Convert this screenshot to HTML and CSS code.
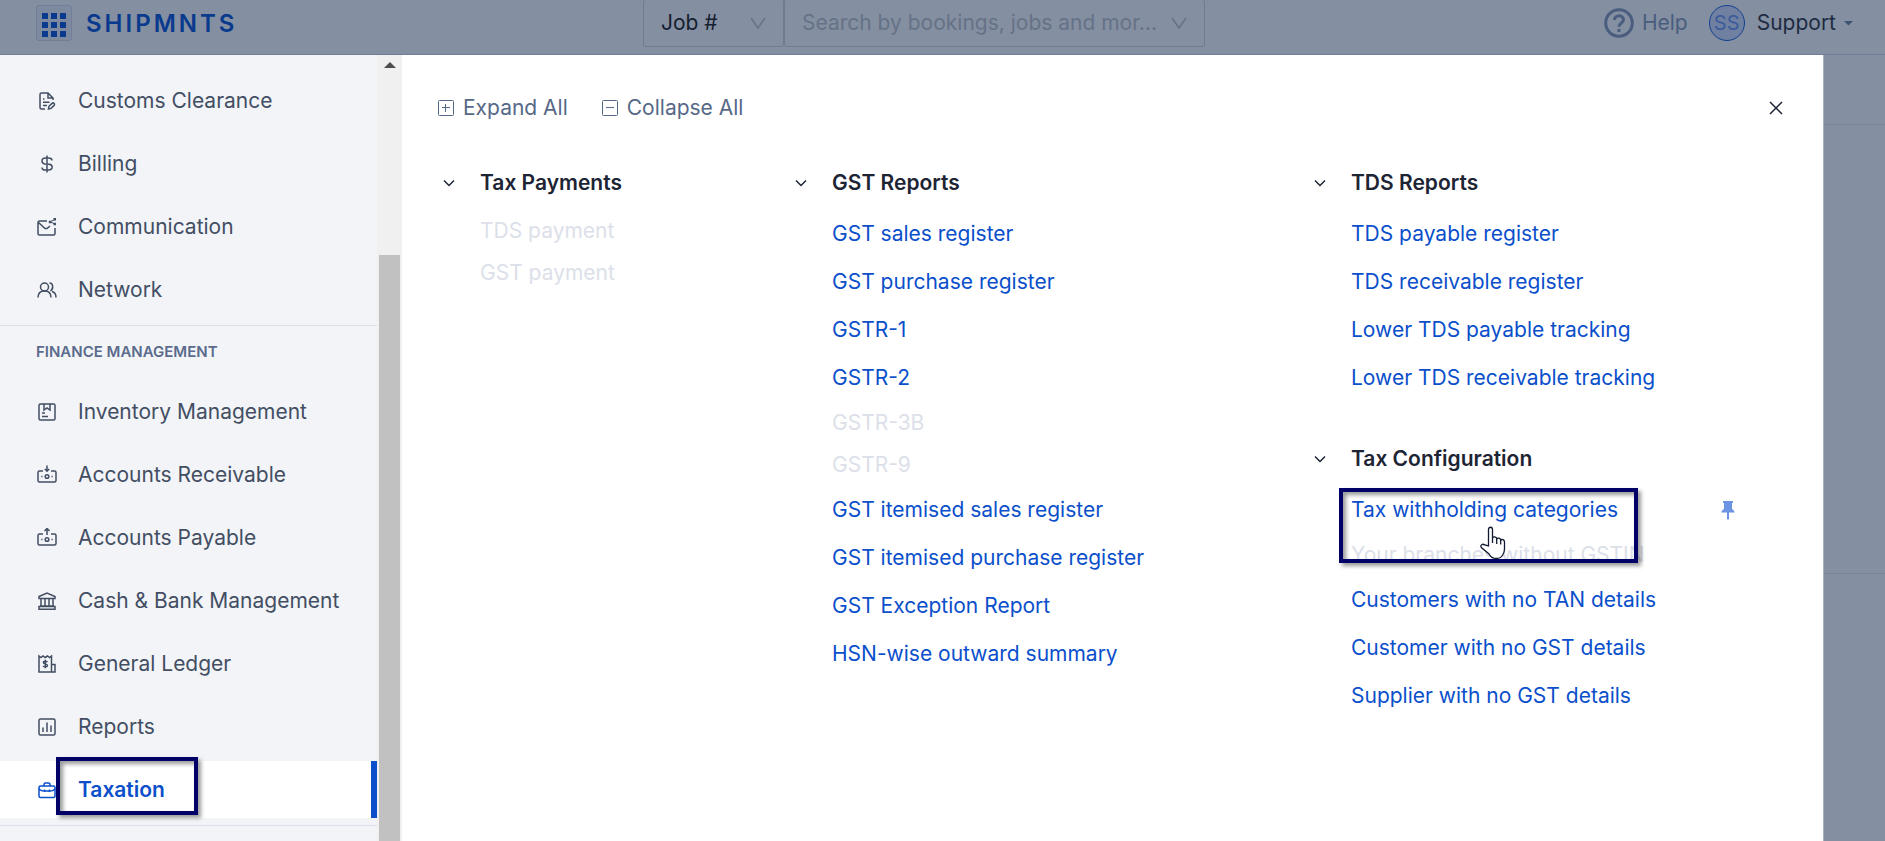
FILE: index.html
```
<!DOCTYPE html>
<html lang="en">
<head>
  <meta charset="UTF-8" />
  <meta name="viewport" content="width=device-width, initial-scale=1.0"/>
  <title>Shipmnts - Taxation</title>
  <link rel="stylesheet" href="styles.css">
</head>
<body>

  <!-- TOP BAR -->
  <header class="topbar">
    <div class="brand">
      <button type="button" class="apps-btn" aria-label="Menu">
        <svg width="24" height="24" viewBox="0 0 24 24"><path d="M0 0h6v6H0zM9 0h6v6H9zM18 0h6v6h-6zM0 9h6v6H0zM9 9h6v6H9zM18 9h6v6h-6zM0 18h6v6H0zM9 18h6v6H9zM18 18h6v6h-6z" fill="currentColor"/></svg>
      </button>
      <a href="#" class="brand-name">SHIPMNTS</a>
    </div>

    <form class="search">
      <div class="search-type">
        <select aria-label="Search type">
          <option>Job #</option>
        </select>
        <svg class="arrow" width="16" height="12" viewBox="0 0 16 12"><path d="M1 1l7 10 7-10"/></svg>
      </div>
      <div class="search-box">
        <input type="text" aria-label="Search" placeholder="Search by bookings, jobs and mor...">
        <svg class="arrow" width="16" height="12" viewBox="0 0 16 12"><path d="M1 1l7 10 7-10"/></svg>
      </div>
    </form>

    <div class="topbar-right">
      <a href="#" class="help">
        <svg width="30" height="30" viewBox="0 0 30 30" fill="none" stroke="currentColor" stroke-width="3"><circle cx="15" cy="15" r="13.3"/><path d="M10.500 12c0-2.600 2-4.200 4.500-4.200s4.500 1.600 4.500 4c0 3-4.500 3.400-4.500 7"/><path d="M15 21v3"/></svg>
        Help
      </a>
      <button type="button" class="user">
        <span class="avatar">SS</span>
        <span>Support</span>
        <svg width="9" height="5" viewBox="0 0 9 5"><path d="M0 0h9L4.500 4.500z" fill="#3f5272"/></svg>
      </button>
    </div>
  </header>

  <div class="layout">

    <!-- SIDEBAR -->
    <aside class="sidebar">
      <nav class="side-nav">
        <ul class="side-group">
          <li><a href="#">
            <svg viewBox="0 0 20 20"><path d="M8 18H4.500A1.500 1.500 0 0 1 3 16.500v-13A1.500 1.500 0 0 1 4.500 2H11l5 5v2M11 2v5h5M6 8h1.500M6 11.200h6.500M6 14.400h4"/><path d="M11.500 18l.5-2.700 3-2.900a1.300 1.300 0 0 1 2.100 2l-3 3z"/></svg>
            Customs Clearance</a></li>
          <li><a href="#">
            <svg viewBox="0 0 20 20"><path d="M10 1.500v17M15 6.500C15 4.700 13.500 4 11.500 4h-3C6.500 4 5 5.200 5 7s1.300 2.700 3 3l4 .3c2 .2 3.200 1 3.200 2.800S13.500 16 11.500 16h-3C6.500 16 5 15.200 5 13.400" /></svg>
            Billing</a></li>
          <li><a href="#">
            <svg viewBox="0 0 20 20"><path d="M10 4H2.500A1.500 1.500 0 0 0 1 5.500v11A1.500 1.500 0 0 0 2.500 18h14a1.500 1.500 0 0 0 1.500-1.500V11M1.500 5.500l6.500 6h2l3-2.500"/><path d="M18 2.500L13 4.800l5 2.200" stroke-width="1"/><path d="M11.800 3.800h2.400v2.400h-2.400zM16.500 1h2.500v2.500h-2.500zM16.500 5.800h2.500v2.500h-2.500z" fill="currentColor" stroke="none"/></svg>
            Communication</a></li>
          <li><a href="#">
            <svg viewBox="0 0 20 20"><circle cx="7.500" cy="7" r="4"/><path d="M1 17.500c0-4 2.500-6.500 6.500-6.500s6.500 2.500 6.500 6.500M12.500 3c3.500-.2 4.500 5.500 1 8M15 11.500c2.800.7 4 3 4 6"/></svg>
            Network</a></li>
        </ul>

        <h2 class="side-title">FINANCE MANAGEMENT</h2>
        <ul class="side-group">
          <li><a href="#">
            <svg viewBox="0 0 20 20"><rect x="2" y="2" width="16" height="16" rx="1.500"/><path d="M7 2v6l3-2 3 2V2M5 11h3M5 14.500h6"/></svg>
            Inventory Management</a></li>
          <li><a href="#">
            <svg viewBox="0 0 20 20"><path d="M6 6H2.500A1.500 1.500 0 0 0 1 7.500v8A1.500 1.500 0 0 0 2.500 17h15a1.500 1.500 0 0 0 1.500-1.500v-8A1.500 1.500 0 0 0 17.500 6H14M10 .5V6M7.800 4L10 6.200 12.200 4M4.300 11.500h1.200M14.500 11.500h1.200"/><circle cx="10" cy="11.500" r="1.800"/></svg>
            Accounts Receivable</a></li>
          <li><a href="#">
            <svg viewBox="0 0 20 20"><path d="M6 6H2.500A1.500 1.500 0 0 0 1 7.500v8A1.500 1.500 0 0 0 2.500 17h15a1.500 1.500 0 0 0 1.500-1.500v-8A1.500 1.500 0 0 0 17.500 6H14M10 .8V7M7.500 3L10 .5 12.500 3M4.300 11.500h1.200M14.500 11.500h1.200"/><circle cx="10" cy="11.500" r="1.800"/></svg>
            Accounts Payable</a></li>
          <li><a href="#">
            <svg viewBox="0 0 20 20"><path d="M2 5.500L10 2l8 3.500v2H2zM4 7.500V15M8 7.500V15M12 7.500V15M16 7.500V15M3 15h14M2 18.200h16V15.500H2z"/></svg>
            Cash &amp; Bank Management</a></li>
          <li><a href="#">
            <svg viewBox="0 0 20 20"><path d="M14.500 18H2V2l2 1.500L6 2l2.200 1.500L10.500 2l2 1.500 2-1.500zM14.500 10.500H18V18h-3.500"/><path d="M8.300 5.800v8.400M10.500 8c-.8-1-4.200-1.200-4.200.5s4.200 1 4.200 2.900-3.500 1.700-4.400.6"/></svg>
            General Ledger</a></li>
          <li><a href="#">
            <svg viewBox="0 0 20 20"><rect x="2" y="2" width="16" height="16" rx="1.500"/><path d="M6 10.500V15M10 5.500V15M14 8.500V15"/></svg>
            Reports</a></li>
          <li class="active"><a href="#">
            <svg viewBox="0 0 20 20"><rect x="2" y="6" width="16" height="11.500" rx="1.500"/><path d="M7 6V4.500A1.500 1.500 0 0 1 8.500 3h3A1.500 1.500 0 0 1 13 4.500V6M2 8.500c1 2.500 3 2.500 5.500 2.500h5c2.500 0 4.500 0 5.500-2.500M7.500 9.500V12M12.500 9.500V12"/></svg>
            <span class="marked">Taxation<span class="mark-box mark-taxation"></span></span></a></li>
        </ul>
      </nav>
      <div class="scrollbar">
        <span class="scroll-up"></span>
        <span class="scroll-thumb"></span>
      </div>
    </aside>

    <!-- MEGA MENU -->
    <main class="panel">
      <div class="toolbar">
        <button type="button" class="tool-btn">
          <svg width="16" height="16" viewBox="0 0 16 16"><rect x=".5" y=".5" width="15" height="15" rx="1"/><path d="M4 7.500h8M7.500 4v8"/></svg>
          Expand All
        </button>
        <button type="button" class="tool-btn">
          <svg width="16" height="16" viewBox="0 0 16 16"><rect x=".5" y=".5" width="15" height="15" rx="1"/><path d="M4 7.500h8"/></svg>
          Collapse All
        </button>
        <button type="button" class="close-btn" aria-label="Close">
          <svg width="14" height="14" viewBox="0 0 14 14"><path d="M1 1l12 12M13 1L1 13"/></svg>
        </button>
      </div>

      <div class="columns">
        <div class="column">
          <section class="menu">
            <h3><svg class="chevron" viewBox="0 0 12 8"><path d="M1 1.500l5 5 5-5"/></svg>Tax Payments</h3>
            <ul>
              <li class="disabled">TDS payment</li>
              <li class="disabled">GST payment</li>
            </ul>
          </section>
        </div>

        <div class="column">
          <section class="menu">
            <h3><svg class="chevron" viewBox="0 0 12 8"><path d="M1 1.500l5 5 5-5"/></svg>GST Reports</h3>
            <ul>
              <li><a href="#">GST sales register</a></li>
              <li><a href="#">GST purchase register</a></li>
              <li><a href="#">GSTR-1</a></li>
              <li><a href="#">GSTR-2</a></li>
              <li class="disabled">GSTR-3B</li>
              <li class="disabled">GSTR-9</li>
              <li><a href="#">GST itemised sales register</a></li>
              <li><a href="#">GST itemised purchase register</a></li>
              <li><a href="#">GST Exception Report</a></li>
              <li><a href="#">HSN-wise outward summary</a></li>
            </ul>
          </section>
        </div>

        <div class="column">
          <section class="menu">
            <h3><svg class="chevron" viewBox="0 0 12 8"><path d="M1 1.500l5 5 5-5"/></svg>TDS Reports</h3>
            <ul>
              <li><a href="#">TDS payable register</a></li>
              <li><a href="#">TDS receivable register</a></li>
              <li><a href="#">Lower TDS payable tracking</a></li>
              <li><a href="#">Lower TDS receivable tracking</a></li>
            </ul>
          </section>
          <section class="menu">
            <h3><svg class="chevron" viewBox="0 0 12 8"><path d="M1 1.500l5 5 5-5"/></svg>Tax Configuration</h3>
            <ul>
              <li class="pinned">
                <a href="#">Tax withholding categories</a>
                <button type="button" class="pin-btn" aria-label="Pin">
                  <svg width="14" height="20" viewBox="0 0 14 20"><path d="M2 1h10v2h-1v6c1.500.8 2.500 2 2.700 3.500H8v6.500l-1 1-1-1v-6.500H.3C.5 11 1.500 9.800 3 9V3H2z" fill="currentColor"/></svg>
                </button>
                <span class="mark-box mark-withholding"></span>
                <svg class="cursor" width="26" height="36" viewBox="0 0 26 36"><path d="M8.500 20V3.500C8.500.500 12.500.5 12.500 3.500v8.500c.5-1.500 4-1.500 4.200.8.800-1.300 3.800-.8 4 1.200 1-1 3.800-.5 3.800 2V23c0 3-1 4.500-1.800 6-1.500 2.500-3.500 3.500-6.200 3.500-4 0-6-1.500-7.500-4.500L1.300 21.500c-1.500-2.500 1.500-4.200 3.400-2.500z" fill="#fff" stroke="#111a30" stroke-width="1.300"/><path d="M12.500 12v5M16.700 13v5M20.700 14v4.500" stroke="#111a30" stroke-width="1.300"/></svg>
              </li>
              <li class="disabled">Your branches without GSTIN</li>
              <li><a href="#">Customers with no TAN details</a></li>
              <li><a href="#">Customer with no GST details</a></li>
              <li><a href="#">Supplier with no GST details</a></li>
            </ul>
          </section>
        </div>
      </div>
    </main>

    <!-- dimmed page behind the menu -->
    <div class="backdrop">
      <div class="backdrop-head"></div>
      <div class="backdrop-body"></div>
    </div>
  </div>

</body>
</html>
```

FILE: styles.css
```
* {
  box-sizing: border-box;
}

body {
  font-family: Inter, "Liberation Sans", sans-serif;
  font-size: 21px;
  font-weight: 400;
  line-height: 30px;
  color: #1d2433;
  background: #848fa1;
  margin: 0;
  height: 100vh;
  overflow: hidden;
  display: flex;
  flex-direction: column;
}

ul {
  list-style: none;
  margin: 0;
  padding: 0;
}

a {
  text-decoration: none;
}

button, input, select {
  font: inherit;
  color: inherit;
  background: none;
  border: none;
  padding: 0;
}

button {
  cursor: pointer;
}

svg {
  flex: none;
}

/* === TOP BAR === */
.topbar {
  display: flex;
  align-items: center;
  flex: none;
  height: 55px;
  padding: 0 32px 8px 36px;
  border-bottom: 1px solid #6f7d96;
}

.brand {
  display: flex;
  align-items: center;
  gap: 14px;
  width: 607px;
}

.apps-btn {
  display: flex;
  align-items: center;
  justify-content: center;
  width: 36px;
  height: 36px;
  padding-top: 3px;
  color: #0a3a8e;
  background: #7e8a9f;
  border: 1px solid #727f97;
  border-radius: 3px;
}

.brand-name {
  padding-top: 2px;
  font-size: 24px;
  font-weight: 600;
  letter-spacing: 3px;
  color: #0a3a8e;
}

.search {
  display: flex;
}

.search-type, .search-box {
  display: flex;
  align-items: center;
  height: 48px;
  padding: 0 17px;
  border: 1px solid #6f7b90;
  border-radius: 3px;
}

.search-type {
  width: 141px;
}

.search-box {
  width: 421px;
}

.search select {
  appearance: none;
  flex: 1;
  color: #15202f;
}

.search input {
  flex: 1;
  min-width: 0;
  outline: none;
}

.search input::placeholder {
  color: #667287;
  opacity: 1;
}

.arrow {
  fill: none;
  stroke: #667287;
  stroke-width: 1.5;
}

.topbar-right {
  display: flex;
  align-items: center;
  gap: 21px;
  margin-left: auto;
}

.help {
  display: flex;
  align-items: center;
  gap: 8px;
  color: #4a5d7e;
}

.user {
  display: flex;
  align-items: center;
  gap: 8px;
  color: #1d2b42;
}

.avatar {
  width: 36px;
  height: 36px;
  margin-right: 4px;
  line-height: 34px;
  font-size: 20px;
  text-align: center;
  color: #3c5c9c;
  background: #6f80a0;
  border: 1px solid #123f91;
  border-radius: 50%;
}

/* === LAYOUT === */
.layout {
  display: flex;
  flex: 1;
  min-height: 0;
}

/* === SIDEBAR === */
.sidebar {
  display: flex;
  flex: none;
  width: 402px;
  background: #f2f4f8;
}

.side-nav {
  flex: 1;
  padding-top: 17px;
  overflow: hidden;
}

.side-group {
  display: flex;
  flex-direction: column;
  gap: 6px;
  padding-bottom: 7px;
  border-bottom: 1px solid #dcdfe9;
}

.side-group a {
  display: flex;
  align-items: center;
  gap: 21px;
  height: 57px;
  padding-left: 37px;
  color: #434e63;
}

.side-group svg {
  width: 20px;
  height: 20px;
  fill: none;
  stroke: currentColor;
  stroke-width: 1.5;
}

.side-group .active a {
  color: #0b4fcb;
  font-weight: 600;
  background: #fff;
  border-right: 6px solid #0b4fcb;
}

.side-title {
  margin: 0;
  padding: 11px 36px 16px;
  font-size: 15px;
  font-weight: 600;
  color: #5b6b8c;
}

.scrollbar {
  display: flex;
  flex-direction: column;
  align-items: center;
  width: 25px;
  background: #f0f0f0;
}

.scroll-up {
  margin: 7px 0 187px;
  border: 6px solid transparent;
  border-top: none;
  border-bottom-color: #4d4d4d;
}

.scroll-thumb {
  flex: 1;
  width: 21px;
  background: #c1c1c1;
}

/* === MEGA MENU === */
.panel {
  flex: 1;
  padding: 38px 40px 0 36px;
  background: #fff;
}

.toolbar {
  display: flex;
  align-items: center;
  gap: 34px;
  margin-bottom: 33px;
}

.tool-btn {
  display: flex;
  align-items: center;
  gap: 9px;
  color: #566887;
}

.tool-btn svg {
  fill: none;
  stroke: #566887;
}

.close-btn {
  display: flex;
  margin-left: auto;
}

.close-btn svg {
  fill: none;
  stroke: #1d2433;
  stroke-width: 1.5;
}

.columns {
  display: grid;
  grid-template-columns: 352fr 519fr 474fr;
}

.menu + .menu {
  margin-top: 30px;
}

.menu h3 {
  display: flex;
  align-items: center;
  gap: 25px;
  height: 54px;
  margin: 0;
  padding-left: 5px;
  font-size: 21px;
  font-weight: 600;
}

.chevron {
  width: 12px;
  height: 8px;
  fill: none;
  stroke: #1d2433;
  stroke-width: 1.5;
}

.menu li {
  display: flex;
  align-items: center;
  height: 48px;
  margin-left: 42px;
}

.menu li a {
  color: #0b4fcb;
}

.menu .disabled {
  height: 42px;
  color: #dce0e9;
}

.menu .pinned {
  position: relative;
}

.pin-btn {
  display: flex;
  margin-left: auto;
  margin-right: 48px;
  color: #6c94e2;
}

/* === MARKERS === */
.marked {
  position: relative;
}

.mark-box {
  position: absolute;
  border: 4px solid #000066;
  box-shadow: 3px 3px 4px rgba(0, 0, 0, 0.4), inset 3px 3px 4px rgba(0, 0, 0, 0.4);
  z-index: 1;
}

.mark-taxation {
  top: -18px;
  left: -22px;
  width: 142px;
  height: 58px;
}

.mark-withholding {
  top: 2px;
  left: -12px;
  width: 299px;
  height: 75px;
}

.cursor {
  position: absolute;
  top: 40px;
  left: 129px;
  fill: none;
  z-index: 2;
}

/* === BACKDROP === */
.backdrop {
  flex: none;
  width: 62px;
  border-left: 1px solid #a9b2c0;
}

.backdrop-head {
  height: 70px;
  border-bottom: 1px solid #778399;
}

.backdrop-body {
  height: 449px;
  border-bottom: 1px solid #778399;
}
```
